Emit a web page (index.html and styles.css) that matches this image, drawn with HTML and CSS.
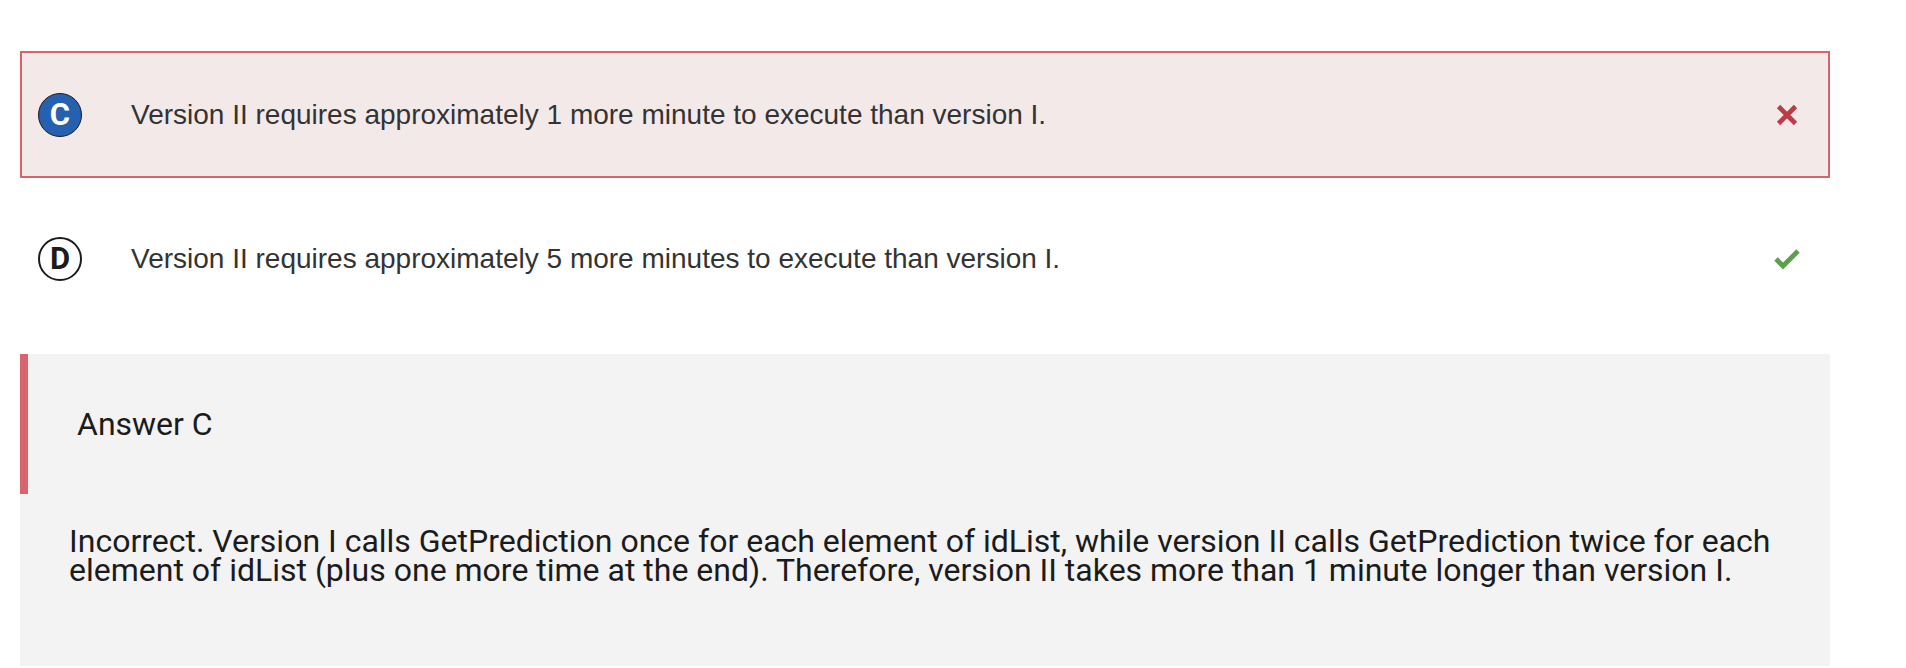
FILE: index.html
```html
<!DOCTYPE html>
<html lang="en">
<head>
  <meta charset="UTF-8" />
  <meta name="viewport" content="width=device-width, initial-scale=1.0"/>
  <title>Question Review</title>
  <link rel="stylesheet" href="styles.css">
</head>
<body>
  <div class="question">
    <div class="choice choice-wrong">
      <span class="letter letter-picked">C</span>
      <span class="choice-text">Version II requires approximately 1 more minute to execute than version I.</span>
      <span class="mark">
        <svg width="26" height="26" viewBox="0 0 26 26">
          <path d="M4.5 4.5 L21.5 21.5 M21.5 4.5 L4.5 21.5" stroke="#bb3b48" stroke-width="4.6" fill="none"/>
        </svg>
      </span>
    </div>

    <div class="choice">
      <span class="letter">D</span>
      <span class="choice-text">Version II requires approximately 5 more minutes to execute than version I.</span>
      <span class="mark">
        <svg width="26" height="22" viewBox="0 0 26 22">
          <path d="M2 11 L9 18 L24 3" stroke="#5e9f4c" stroke-width="4.8" fill="none"/>
        </svg>
      </span>
    </div>

    <div class="feedback">
      <h3 class="feedback-title">Answer C</h3>
      <p class="feedback-text">Incorrect. Version I calls GetPrediction once for each element of idList, while version II calls GetPrediction twice for each<br>element of idList (plus one more time at the end). Therefore, version II takes more than 1 minute longer than version I.</p>
    </div>
  </div>
</body>
</html>
```

FILE: styles.css
```css
body {
  margin: 0;
  padding: 0;
  background: #fff;
  font-family: "Liberation Sans", Arial, sans-serif;
}
.question {
  width: 1810px;
  margin-left: 20px;
  padding-top: 51px;
}
.choice {
  display: flex;
  align-items: center;
  height: 127px;
  box-sizing: border-box;
  border: 2px solid transparent;
  padding: 0 28px 0 16px;
  margin-bottom: 17px;
}
.choice-wrong {
  background: #f4e9e9;
  border-color: #d9636c;
}
.letter {
  width: 44px;
  height: 44px;
  box-sizing: border-box;
  border-radius: 50%;
  border: 2px solid #1c1c1c;
  display: flex;
  align-items: center;
  justify-content: center;
  font-family: Roboto, sans-serif;
  font-weight: 700;
  font-size: 31px;
  color: #1c1c1c;
  margin-right: 49px;
  flex-shrink: 0;
}
.letter-picked {
  background: #2660b0;
  border-width: 1.5px;
  color: #fff;
}
.choice-text {
  flex: 1;
  font-size: 28px;
  color: #333;
}
.mark {
  width: 26px;
  display: flex;
  justify-content: center;
}
.feedback {
  margin-top: 32px;
  background: #f3f3f3;
  height: 312px;
  font-family: Roboto, sans-serif;
  color: #1b1b1b;
}
.feedback-title {
  margin: 0;
  height: 140px;
  display: flex;
  align-items: center;
  border-left: 8px solid #d9646e;
  padding-left: 49px;
  font-size: 32px;
  font-weight: 400;
}
.feedback-text {
  margin: 0;
  padding: 33px 49px 0 49px;
  font-size: 32px;
  line-height: 29px;
  white-space: nowrap;
}
```
